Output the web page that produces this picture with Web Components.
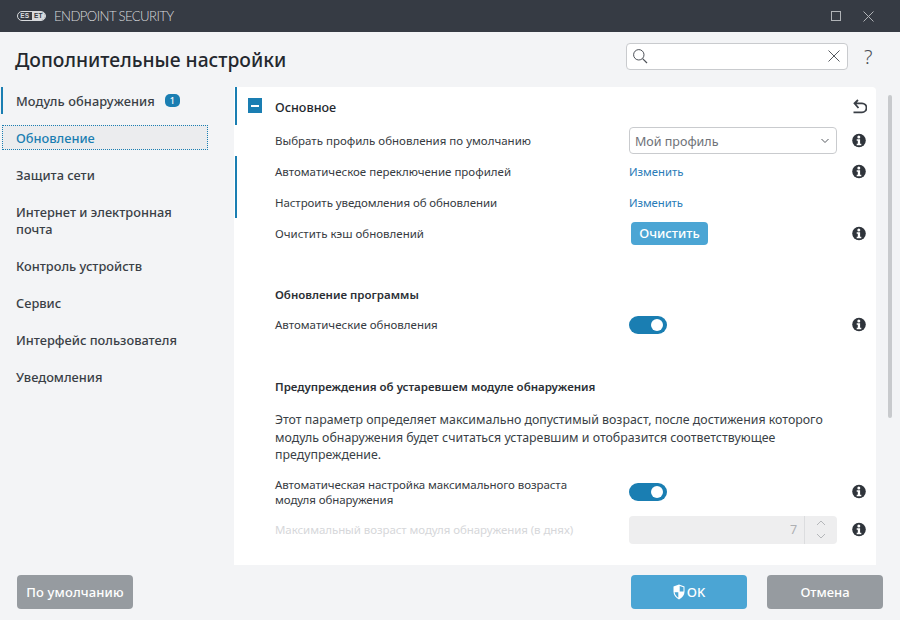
<!DOCTYPE html>
<html lang="ru">
<head>
<meta charset="utf-8">
<title>ESET Endpoint Security</title>
<style>
  html, body { margin: 0; height: 100%; }
  body { font-family: "Noto Sans", sans-serif; background: #f3f4f6; overflow: hidden; }
</style>
</head>
<body>
<eset-window></eset-window>

<script>
const INFO = `<svg width="16" height="16" viewBox="0 0 16 16"><circle cx="8" cy="7.500" r="6.800" fill="#2f343b"/><circle cx="7.800" cy="4.100" r="1.500" fill="#fff"/><path d="M5.700 6.300h3.400v4.500h1.200v1.500H5.700v-1.500h1.100V7.800H5.700z" fill="#fff"/></svg>`;

class EsetTitlebar extends HTMLElement {
    constructor() {
        super();
        this.attachShadow({ mode: 'open' }).innerHTML = `
        <style>
        :host { display: flex; align-items: center; height: 32px; background: #363b44; color: #d8dadd; }
        .logo { display: flex; align-items: center; margin-left: 17px; }
        .eset {
            display: flex; box-sizing: border-box; height: 10px; width: 29px; overflow: hidden;
            border: 1px solid #d8dadd; border-radius: 5px;
            font: 700 6.5px/8px "Liberation Sans", sans-serif; letter-spacing: .2px;
        }
        .eset span { flex: 1; text-align: center; }
        .eset span + span { background: #d8dadd; color: #363b44; }
        .name { margin-left: 8px; font: 300 13.2px/16px Lato, sans-serif; letter-spacing: -.6px; }
        .win { margin-left: auto; display: flex; align-items: center; gap: 22px; margin-right: 26px; }
        svg { display: block; }
        </style>
        <div class="logo"><div class="eset"><span>ES</span><span>ET</span></div><span class="name">ENDPOINT SECURITY</span></div>
        <div class="win">
            <svg width="10" height="10" viewBox="0 0 10 10"><rect x=".5" y=".5" width="9" height="9" fill="none" stroke="#b0b3b7"/></svg>
            <svg width="11" height="11" viewBox="0 0 11 11"><path d="M.5.5l10 10M10.500.5l-10 10" stroke="#b0b3b7" fill="none"/></svg>
        </div>`;
    }
}

class EsetHeader extends HTMLElement {
    constructor() {
        super();
        this.attachShadow({ mode: 'open' }).innerHTML = `
        <style>
        :host { display: flex; align-items: center; height: 55px; padding: 0 27px 0 15px; }
        h1 { margin: 0; font-size: 19.3px; font-weight: 500; color: #24282e; flex: 1; }
        .search {
            box-sizing: border-box; width: 222px; height: 27px; background: #fff; border: 1px solid #c9cbce; margin-top: -7px;
            border-radius: 4px; display: flex; align-items: center; justify-content: space-between; padding: 0 6px 0 5px;
        }
        .help { margin: -6px 0 0 16px; font-size: 20px; line-height: 24px; color: #4a4e55; font-weight: 300; width: 9px; }
        svg { display: block; }
        </style>
        <h1><slot></slot></h1>
        <div class="search">
            <svg width="16" height="16" viewBox="0 0 16 16"><circle cx="6.800" cy="6.800" r="5.200" fill="none" stroke="#4d5158"/><path d="M10.600 10.600l4.400 4.400" stroke="#4d5158" stroke-width="1.200"/></svg>
            <svg width="14" height="14" viewBox="0 0 14 14"><path d="M1.500 1.500l11 11M12.500 1.500l-11 11" stroke="#55595f" fill="none"/></svg>
        </div>
        <span class="help">?</span>`;
    }
}

class EsetNavItem extends HTMLElement {
    constructor() {
        super();
        this.attachShadow({ mode: 'open' }).innerHTML = `
        <style>
        :host {
            display: block; box-sizing: border-box; margin: 0 0 0 2px; width: 206px; min-height: 25px;
            padding: 3px 14px 3px 13px; font-size: 12.8px; line-height: 17px; font-weight: 500; color: #3a3f46;
            border: 1px dotted transparent;
        }
        :host([low]) { padding-top: 4px; padding-bottom: 2px; }
        :host([marked]) {
            margin: 0 0 -1px 1px; width: 207px; height: 27px; padding: 6px 14px 0 13px;
            border: 0; border-left: 2px solid #1a7eb2; letter-spacing: .1px;
        }
        :host([active]) { color: #1a7eb2; background: #ebecee; border: 1px dotted #1a7eb2; }
        .badge {
            display: inline-block; vertical-align: 2px; margin-left: 10px; width: 15px; height: 13px; border-radius: 5px;
            background: #1a7eb2; color: #fff; font-size: 9px; line-height: 13px; text-align: center; letter-spacing: 0;
        }
        </style>
        <slot></slot>${this.hasAttribute('badge') ? `<span class="badge">${this.getAttribute('badge')}</span>` : ''}`;
    }
}

class EsetNav extends HTMLElement {
    constructor() {
        super();
        this.attachShadow({ mode: 'open' }).innerHTML = `
        <style>
        :host { display: flex; flex-direction: column; gap: 12px; width: 234px; flex: none; box-sizing: border-box; }
        </style>
        <slot></slot>`;
    }
}

class EsetRow extends HTMLElement {
    constructor() {
        super();
        this.attachShadow({ mode: 'open' }).innerHTML = `
        <style>
        :host {
            display: grid; grid-template-columns: 354px 1fr 16px; align-items: center;
            min-height: 31px; padding: 0 9px 0 41px; box-sizing: border-box;
            font-size: 11.5px; line-height: 15px; color: #363b42; position: relative;
        }
        :host([disabled]) { color: #d6d7da; }
        :host([marked])::before { content: ""; position: absolute; left: 1px; top: 0; bottom: 0; width: 2px; background: #1a7eb2; }
        .ctl { display: flex; align-items: center; min-height: 22px; }
        .info { width: 16px; height: 16px; }
        svg { display: block; }
        </style>
        <div class="lbl"><slot></slot></div>
        <div class="ctl"><slot name="control"></slot></div>
        <div class="info">${this.hasAttribute('info') ? INFO : ''}</div>`;
    }
}

class EsetSection extends HTMLElement {
    constructor() {
        super();
        this.attachShadow({ mode: 'open' }).innerHTML = `
        <style>
        :host { display: block; padding-left: 41px; font-size: 11.5px; font-weight: 600; line-height: 16px; color: #2b2f35; }
        </style>
        <slot></slot>`;
    }
}

class EsetPanelHead extends HTMLElement {
    constructor() {
        super();
        this.attachShadow({ mode: 'open' }).innerHTML = `
        <style>
        :host {
            display: flex; align-items: center; height: 36px; padding: 0 9px 0 14px; margin-top: 2px; box-sizing: border-box; position: relative;
            font-size: 12.6px; font-weight: 500; color: #24282e;
        }
        :host::before { content: ""; position: absolute; left: 1px; top: -2px; bottom: 0; width: 2px; background: #1a7eb2; }
        .box { width: 14px; height: 15px; margin: -3px 13px 0 0; background: #1a7eb2; display: flex; align-items: center; justify-content: center; }
        .box i { display: block; width: 8px; height: 2px; background: #fff; }
        .txt { flex: 1; }
        svg { display: block; }
        </style>
        <span class="box"><i></i></span>
        <span class="txt"><slot></slot></span>
        <svg width="16" height="16" viewBox="0 0 16 16"><path d="M7 1L3.500 4.300 7.500 9M3.500 4.300H11c2.500 0 4.500 2 4.500 4.500s-2 4.500-4.500 4.500H2.500" fill="none" stroke="#3a3f46" stroke-width="1.800"/></svg>`;
    }
}

class EsetSelect extends HTMLElement {
    constructor() {
        super();
        this.attachShadow({ mode: 'open' }).innerHTML = `
        <style>
        :host {
            display: flex; align-items: center; justify-content: space-between; box-sizing: border-box;
            width: 208px; height: 27px; border: 1px solid #c9cbce; border-radius: 4px; padding: 2px 6px 0 5px;
            font-size: 12.5px; color: #6e7278;
        }
        svg { display: block; margin-top: -2px; }
        </style>
        <slot></slot>
        <svg width="10" height="6" viewBox="0 0 10 6"><path d="M1.500 1l3.500 3.500L8.500 1" fill="none" stroke="#55595f"/></svg>`;
    }
}

class EsetLink extends HTMLElement {
    constructor() {
        super();
        this.attachShadow({ mode: 'open' }).innerHTML = `
        <style>:host { display: inline-block; font-size: 11.35px; color: #2a7cb8; }</style><slot></slot>`;
    }
}

class EsetButton extends HTMLElement {
    constructor() {
        super();
        this.attachShadow({ mode: 'open' }).innerHTML = `
        <style>
        :host {
            display: inline-flex; align-items: center; justify-content: center; box-sizing: border-box;
            height: 34px; width: 116px; border-radius: 4px; background: #969ba0; color: #fff; font-size: 13px; font-weight: 500;
        }
        :host([primary]) { background: #4ba5d4; }
        :host([small]) { height: 23px; width: 77px; margin-left: 2px; background: #4ba5d4; }
        </style>
        <slot></slot>`;
    }
}

class EsetToggle extends HTMLElement {
    constructor() {
        super();
        this.attachShadow({ mode: 'open' }).innerHTML = `
        <style>
        :host { display: flex; align-items: center; justify-content: flex-end; box-sizing: border-box; width: 38px; height: 18px; padding-right: 4px; border-radius: 9px; background: #1a7eb2; }
        i { display: block; width: 12px; height: 12px; border-radius: 50%; background: #fff; }
        </style>
        <i></i>`;
    }
}

class EsetSpinner extends HTMLElement {
    constructor() {
        super();
        this.attachShadow({ mode: 'open' }).innerHTML = `
        <style>
        :host { display: flex; align-items: center; box-sizing: border-box; width: 208px; height: 28px; border-radius: 4px; background: #eeeeef; font-size: 12.5px; color: #aeb0b3; }
        .val { flex: 1; text-align: right; padding-right: 7px; }
        .arr { height: 100%; width: 32px; border-left: 1px solid #dcdddf; display: flex; flex-direction: column; align-items: center; justify-content: center; gap: 7px; }
        svg { display: block; }
        </style>
        <span class="val"><slot></slot></span>
        <span class="arr">
            <svg width="10" height="6" viewBox="0 0 10 6"><path d="M1 5l4-4 4 4" fill="none" stroke="#b5b7ba"/></svg>
            <svg width="10" height="6" viewBox="0 0 10 6"><path d="M1 1l4 4 4-4" fill="none" stroke="#b5b7ba"/></svg>
        </span>`;
    }
}

class EsetPanel extends HTMLElement {
    constructor() {
        super();
        this.attachShadow({ mode: 'open' }).innerHTML = `
        <style>
        :host { display: flex; flex-direction: column; width: 642px; height: 478px; overflow: hidden; background: #fff; border-radius: 0 4px 0 0; flex: none; }
        </style>
        <slot></slot>`;
    }
}

class EsetWindow extends HTMLElement {
    constructor() {
        super();
        this.attachShadow({ mode: 'open' }).innerHTML = `
        <style>
        :host { display: flex; flex-direction: column; width: 900px; height: 620px; background: #f3f4f6; }
        .body { display: flex; height: 478px; }
        .track { flex: 1; padding: 8px 0 0 12px; }
        .thumb { width: 4px; height: 323px; background: #c8cacd; border-radius: 2px; }
        .foot { flex: 1; display: flex; align-items: center; padding: 0 17px 1px; gap: 20px; }
        .foot .sp { flex: 1; }
        .txt { font-size: 12.37px; line-height: 17.5px; color: #3a3f46; padding: 0 40px 0 41px; }
        .gap { flex: none; }
        .ok { width: 12px; height: 16px; margin-right: 2px; display: block; }
        </style>
        <eset-titlebar></eset-titlebar>
        <eset-header>Дополнительные настройки</eset-header>
        <div class="body">
            <eset-nav>
                <eset-nav-item marked badge="1">Модуль обнаружения</eset-nav-item>
                <eset-nav-item active low>Обновление</eset-nav-item>
                <eset-nav-item low>Защита сети</eset-nav-item>
                <eset-nav-item style="padding-top:4px">Интернет и электронная почта</eset-nav-item>
                <eset-nav-item>Контроль устройств</eset-nav-item>
                <eset-nav-item>Сервис</eset-nav-item>
                <eset-nav-item>Интерфейс пользователя</eset-nav-item>
                <eset-nav-item>Уведомления</eset-nav-item>
            </eset-nav>
            <eset-panel>
                <eset-panel-head>Основное</eset-panel-head>
                <eset-row info>Выбрать профиль обновления по умолчанию<eset-select slot="control">Мой профиль</eset-select></eset-row>
                <eset-row info marked>Автоматическое переключение профилей<eset-link slot="control">Изменить</eset-link></eset-row>
                <eset-row marked style="letter-spacing:-.08px">Настроить уведомления об обновлении<eset-link slot="control">Изменить</eset-link></eset-row>
                <eset-row info>Очистить кэш обновлений<eset-button slot="control" small>Очистить</eset-button></eset-row>
                <div class="gap" style="height:38px"></div>
                <eset-section>Обновление программы</eset-section>
                <div class="gap" style="height:6px"></div>
                <eset-row info>Автоматические обновления<eset-toggle slot="control"></eset-toggle></eset-row>
                <div class="gap" style="height:39px"></div>
                <eset-section>Предупреждения об устаревшем модуле обнаружения</eset-section>
                <div class="gap" style="height:16px"></div>
                <div class="txt">Этот параметр определяет максимально допустимый возраст, после достижения которого модуль обнаружения будет считаться устаревшим и отобразится соответствующее предупреждение.</div>
                <div class="gap" style="height:12.5px"></div>
                <eset-row info style="letter-spacing:-.07px">Автоматическая настройка максимального возраста<br>модуля обнаружения<eset-toggle slot="control"></eset-toggle></eset-row>
                <div class="gap" style="height:7px"></div>
                <eset-row info disabled style="letter-spacing:-.07px">Максимальный возраст модуля обнаружения (в днях)<eset-spinner slot="control">7</eset-spinner></eset-row>
            </eset-panel>
            <div class="track"><div class="thumb"></div></div>
        </div>
        <div class="foot">
            <eset-button style="letter-spacing:.15px">По умолчанию</eset-button>
            <span class="sp"></span>
            <eset-button primary><svg class="ok" viewBox="0 0 12 16"><path d="M6 .5l5.500 2v5.300c0 3.500-2.400 6-5.500 7.700C2.900 13.800.5 11.300.5 7.800V2.500z" fill="#fff"/><path d="M6.700 2l3.800 1.300v4.100H6.700zM5.300 8.300v5.400C3.400 12.500 1.900 10.600 1.600 8.300z" fill="#4ba5d4"/></svg>OK</eset-button>
            <eset-button>Отмена</eset-button>
        </div>`;
    }
}

customElements.define('eset-titlebar', EsetTitlebar);
customElements.define('eset-header', EsetHeader);
customElements.define('eset-nav-item', EsetNavItem);
customElements.define('eset-nav', EsetNav);
customElements.define('eset-row', EsetRow);
customElements.define('eset-section', EsetSection);
customElements.define('eset-panel-head', EsetPanelHead);
customElements.define('eset-select', EsetSelect);
customElements.define('eset-link', EsetLink);
customElements.define('eset-button', EsetButton);
customElements.define('eset-toggle', EsetToggle);
customElements.define('eset-spinner', EsetSpinner);
customElements.define('eset-panel', EsetPanel);
customElements.define('eset-window', EsetWindow);
</script>
</body>
</html>
